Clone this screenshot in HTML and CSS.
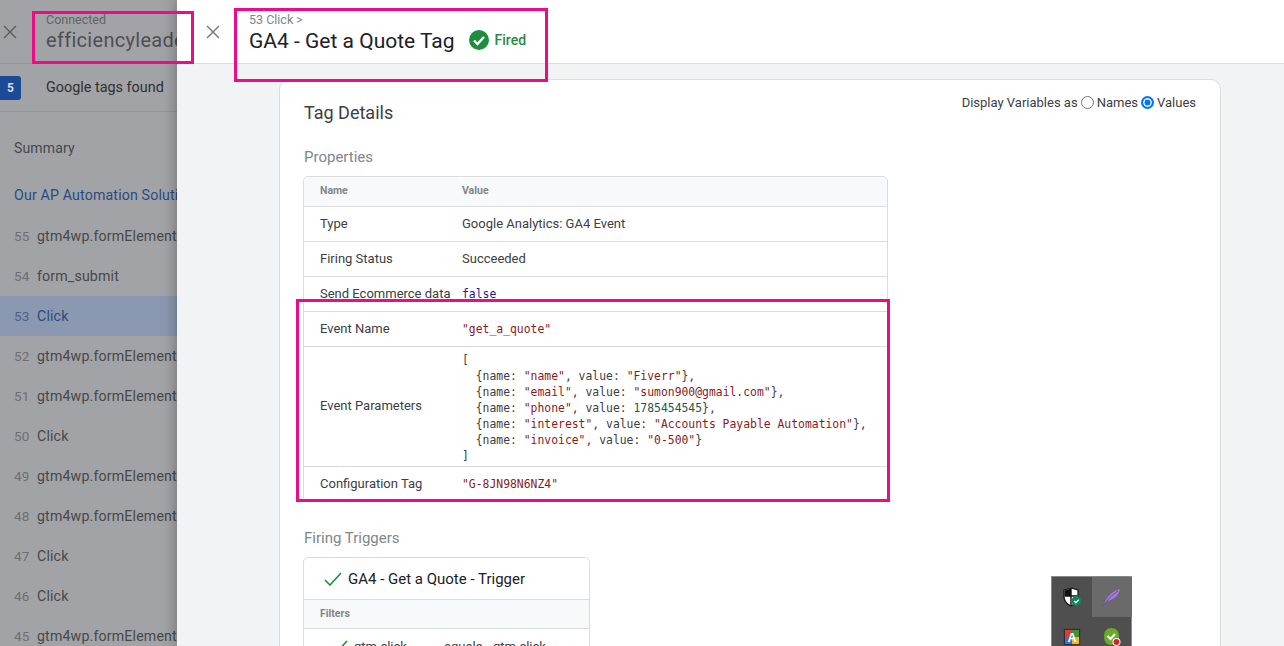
FILE: index.html
```html
<!DOCTYPE html>
<html lang="en">
  <head>
    <meta charset="UTF-8" />
    <title>GA4 - Get a Quote Tag</title>
    <link rel="stylesheet" href="styles.css">
  </head>
  <body>
    <div class="app">
      <aside class="sidebar">
        <div class="side-head">
          <svg class="close" viewBox="0 0 14 14"><path d="M1 1l12 12M13 1L1 13" /></svg>
          <div class="side-title">
            <div class="small">Connected</div>
            <div class="domain">efficiencyleaders.com</div>
          </div>
        </div>
        <div class="tags-row">
          <span class="badge">5</span>
          <span class="tags-text">Google tags found</span>
        </div>
        <div class="summary">Summary</div>
        <div class="page">Our AP Automation Solution</div>
        <div class="evt"><span class="num">55</span><span>gtm4wp.formElementEnter</span></div>
        <div class="evt"><span class="num">54</span><span>form_submit</span></div>
        <div class="evt active"><span class="num">53</span><span>Click</span></div>
        <div class="evt"><span class="num">52</span><span>gtm4wp.formElementLeave</span></div>
        <div class="evt"><span class="num">51</span><span>gtm4wp.formElementEnter</span></div>
        <div class="evt"><span class="num">50</span><span>Click</span></div>
        <div class="evt"><span class="num">49</span><span>gtm4wp.formElementLeave</span></div>
        <div class="evt"><span class="num">48</span><span>gtm4wp.formElementEnter</span></div>
        <div class="evt"><span class="num">47</span><span>Click</span></div>
        <div class="evt"><span class="num">46</span><span>Click</span></div>
        <div class="evt"><span class="num">45</span><span>gtm4wp.formElementLeave</span></div>
      </aside>

      <main class="panel">
        <header class="panel-head">
          <svg class="close panel-close" viewBox="0 0 14 14"><path d="M1 1l12 12M13 1L1 13" /></svg>
          <div>
            <div class="crumb">53 Click &gt;</div>
            <div class="title-row">
              <h1>GA4 - Get a Quote Tag</h1>
              <svg class="fired-icon" viewBox="0 0 20 20">
                <circle cx="10" cy="10" r="10" fill="#1e8e3e" />
                <path d="M5 10.5l3.5 3.5L15 7" fill="none" stroke="#fff" stroke-width="2.4" />
              </svg>
              <span class="fired">Fired</span>
            </div>
          </div>
        </header>

        <div class="panel-body">
          <section class="card">
            <div class="card-top">
              <h2>Tag Details</h2>
              <div class="display-vars">
                <span>Display Variables as</span>
                <span class="radio"></span><span>Names</span>
                <span class="radio on"></span><span>Values</span>
              </div>
            </div>

            <h3>Properties</h3>
            <table class="props">
              <tr class="head"><th>Name</th><th>Value</th></tr>
              <tr><td>Type</td><td>Google Analytics: GA4 Event</td></tr>
              <tr><td>Firing Status</td><td>Succeeded</td></tr>
              <tr><td>Send Ecommerce data</td><td><code class="kw">false</code></td></tr>
              <tr><td>Event Name</td><td><code class="str">"get_a_quote"</code></td></tr>
              <tr class="tall">
                <td>Event Parameters</td>
                <td><pre>[
  {name: <i>"name"</i>, value: <i>"Fiverr"</i>},
  {name: <i>"email"</i>, value: <i>"sumon900@gmail.com"</i>},
  {name: <i>"phone"</i>, value: <b>1785454545</b>},
  {name: <i>"interest"</i>, value: <i>"Accounts Payable Automation"</i>},
  {name: <i>"invoice"</i>, value: <i>"0-500"</i>}
]</pre></td>
              </tr>
              <tr><td>Configuration Tag</td><td><code class="str">"G-8JN98N6NZ4"</code></td></tr>
            </table>

            <h3 class="triggers-title">Firing Triggers</h3>
            <div class="trigger">
              <div class="trigger-name">
                <svg class="check" viewBox="0 0 18 14"><path d="M1 8l5 5L17 1" /></svg>
                <span>GA4 - Get a Quote - Trigger</span>
              </div>
              <div class="filters">Filters</div>
              <div class="filter-row">
                <svg class="check" viewBox="0 0 18 14"><path d="M1 8l5 5L17 1" /></svg>
                <span class="f1">gtm.click</span><span class="f2">equals</span><span>gtm.click</span>
              </div>
            </div>
          </section>
        </div>
      </main>

      <div class="mark mark-a"></div>
      <div class="mark mark-b"></div>
      <div class="mark mark-c"></div>

      <div class="tray">
        <div class="tray-cell">
          <svg viewBox="0 0 20 20" width="20" height="20">
            <path d="M2 3l7-2 7 2v7c0 4-3 7-7 9-4-2-7-5-7-9z" fill="#fff" stroke="#111" stroke-width="1.2" />
            <path d="M9 1.500v17M2.500 9h13" stroke="#111" stroke-width="1.4" />
            <path d="M2.500 3.500L9 1.500V9H2.500z" fill="#111" />
            <circle cx="14.500" cy="14" r="5" fill="#12825a" />
            <path d="M12.200 14l1.700 1.700 2.900-3" fill="none" stroke="#fff" stroke-width="1.300" />
          </svg>
        </div>
        <div class="tray-cell lit">
          <svg viewBox="0 0 20 20" width="20" height="20">
            <path d="M2 17C5 9 11 4 18 2c-1 6-6 11-13 12z" fill="#a678e2" />
            <path d="M1 19C6 12 10 8 16 4" fill="none" stroke="#6d4aa6" stroke-width="1" />
          </svg>
        </div>
        <div class="tray-cell">
          <svg viewBox="0 0 20 20" width="18" height="18">
            <rect x="1" y="1" width="18" height="18" fill="#222" />
            <rect x="2" y="2" width="8" height="8" fill="#d9402f" />
            <rect x="10" y="2" width="8" height="8" fill="#3f8f3e" />
            <rect x="2" y="10" width="8" height="8" fill="#3a6fd1" />
            <rect x="10" y="10" width="8" height="8" fill="#eab52c" />
            <text x="10" y="16" text-anchor="middle" class="tray-a">A</text>
          </svg>
        </div>
        <div class="tray-cell">
          <svg viewBox="0 0 20 20" width="20" height="20">
            <path d="M9 1c5 0 8 3 8 8s-3 9-8 9-7-4-7-9 3-8 7-8z" fill="#6aa92c" />
            <path d="M5.500 9l3 3 4.500-5" fill="none" stroke="#fff" stroke-width="2" />
            <circle cx="14.500" cy="15" r="4" fill="#fff" />
            <circle cx="14.500" cy="15" r="3" fill="#d8232a" />
          </svg>
        </div>
      </div>
    </div>
  </body>
</html>
```

FILE: styles.css
```css
* {
  box-sizing: border-box;
}

body {
  margin: 0;
  font-family: Roboto, "Liberation Sans", sans-serif;
  color: #3c4043;
  background-color: #f1f3f4;
}

.app {
  position: relative;
  display: flex;
  height: 100vh;
  overflow: hidden;
}

/* left list, dimmed by the open panel */
.sidebar {
  flex: 0 0 177px;
  overflow: hidden;
  white-space: nowrap;
  background-color: #a2a3a6;
  font-family: Roboto, sans-serif;
  color: #3f4042;
}

.side-head {
  display: flex;
  align-items: center;
  height: 64px;
  padding-left: 3px;
  border-bottom: 1px solid #949597;
}

.close {
  flex: none;
  width: 14px;
  height: 14px;
  fill: none;
  stroke: #5a5b5d;
  stroke-width: 1.4;
}

.side-title {
  margin-left: 29px;
  margin-top: 3px;
}

.small {
  font-size: 12.5px;
  line-height: 14px;
  color: #626365;
}

.domain {
  font-size: 20px;
  line-height: 26px;
  color: #4e4f51;
  letter-spacing: 0.3px;
}

.tags-row {
  display: flex;
  align-items: center;
  height: 48px;
  border-bottom: 1px solid #949597;
}

.badge {
  width: 21px;
  height: 24px;
  margin-right: 25px;
  border-radius: 0 3px 3px 0;
  background-color: #1b4b95;
  color: #d5dbe6;
  font-size: 12px;
  font-weight: 700;
  line-height: 24px;
  text-align: center;
}

.tags-text {
  font-size: 14.4px;
  color: #2f3032;
}

.summary {
  padding: 28px 0 0 14px;
  height: 60px;
  font-size: 14px;
  letter-spacing: 0.15px;
  color: #47484a;
}

.page {
  height: 44px;
  padding: 15px 0 0 14px;
  font-size: 14.2px;
  letter-spacing: 0.15px;
  color: #2c4a82;
}

.evt {
  display: flex;
  align-items: center;
  height: 40px;
  padding-left: 14px;
  font-size: 14.2px;
  letter-spacing: 0.15px;
  color: #47484a;
}

.evt .num {
  flex: 0 0 23px;
  font-size: 13.5px;
  color: #6d6e70;
}

.evt.active {
  background-color: #8a99b1;
  color: #2f4a7d;
}

.evt.active .num {
  color: #4b6088;
}

/* right panel */
.panel {
  position: relative;
  flex: 1;
  display: flex;
  flex-direction: column;
  min-width: 0;
  box-shadow: 0 0 14px rgba(0, 0, 0, 0.35);
}

.panel-head {
  display: flex;
  flex: 0 0 64px;
  padding: 14px 0 0 29px;
  background-color: #fff;
  border-bottom: 1px solid #dadce0;
}

.panel-close {
  margin: 11px 29px 0 0;
  stroke: #70757a;
}

.crumb {
  font-size: 12.5px;
  line-height: 12px;
  color: #80868b;
}

.title-row {
  display: flex;
  align-items: center;
  margin-top: 2px;
}

h1 {
  margin: 0;
  font-size: 21px;
  font-weight: 400;
  line-height: 26px;
  color: #202124;
}

.fired-icon {
  width: 20px;
  height: 20px;
  margin: 0 6px 3px 14px;
}

.fired {
  margin-bottom: 3px;
  font-size: 14px;
  font-weight: 500;
  color: #2a8a45;
}

.panel-body {
  flex: 1;
  overflow: hidden;
  padding: 15px 63px 0 102px;
}

.card {
  height: 620px;
  padding: 0 24px;
  background-color: #fff;
  border: 1px solid #dadce0;
  border-radius: 10px;
}

.card-top {
  display: flex;
  justify-content: space-between;
  height: 67px;
  padding-top: 13px;
}

h2 {
  margin: 8px 0 0;
  font-size: 18px;
  font-weight: 400;
  line-height: 24px;
  color: #3c4043;
}

.display-vars {
  display: flex;
  align-items: flex-start;
  font-size: 13px;
  line-height: 19px;
  color: #3c4043;
}

.radio {
  width: 13px;
  height: 13px;
  margin: 3px 3px 0 3px;
  border: 1px solid #767676;
  border-radius: 50%;
}

.radio.on {
  border: 2px solid #0075ff;
  background-color: #0075ff;
  box-shadow: inset 0 0 0 1.5px #fff;
}

h3 {
  margin: 0 0 9px;
  font-size: 15px;
  font-weight: 400;
  line-height: 20px;
  color: #80868b;
}

.props {
  width: 585px;
  margin-left: -1px;
  border-collapse: separate;
  border-spacing: 0;
  border: 1px solid #dadce0;
  border-radius: 5px;
  font-size: 13px;
  color: #3c4043;
}

.props th {
  height: 29px;
  padding: 0 0 2px 16px;
  background-color: #f8f9fa;
  color: #80868b;
  font-size: 10.5px;
  font-weight: 700;
  text-align: left;
  border-radius: 5px 5px 0 0;
}

.props td {
  height: 35px;
  padding: 0 0 2px 16px;
  border-top: 1px solid #dadce0;
}

.props th:first-child,
.props td:first-child {
  width: 157px;
}

.props td + td,
.props th + th {
  padding-left: 1px;
}

.props .tall td {
  height: 120px;
}

.props .tall td + td {
  padding-top: 3px;
  padding-bottom: 0;
}

code,
pre {
  font-family: "DejaVu Sans Mono", monospace;
  font-size: 11.4px;
}

pre {
  margin: 0;
  line-height: 16px;
  color: #3c4043;
}

pre i,
.str {
  font-style: normal;
  color: #8a1c1c;
}

pre b {
  font-weight: 400;
  color: #1d5a45;
}

.kw {
  color: #1a1a8c;
}

.triggers-title {
  margin: 26px 0 9px;
}

.trigger {
  width: 287px;
  margin-left: -1px;
  border: 1px solid #dadce0;
  border-radius: 5px;
  font-size: 15px;
}

.trigger-name {
  display: flex;
  align-items: center;
  height: 41px;
  padding-left: 20px;
  color: #202124;
}

.check {
  width: 18px;
  height: 14px;
  margin-right: 6px;
  fill: none;
  stroke: #1e8e3e;
  stroke-width: 1.6;
}

.filters {
  height: 30px;
  padding-left: 16px;
  background-color: #f8f9fa;
  border-top: 1px solid #dadce0;
  border-bottom: 1px solid #dadce0;
  color: #80868b;
  font-size: 10.5px;
  font-weight: 700;
  line-height: 28px;
}

.filter-row {
  display: flex;
  align-items: center;
  height: 35px;
  padding-left: 26px;
  font-size: 13px;
}

.f1 {
  width: 90px;
}

.f2 {
  width: 49px;
}

/* annotation boxes from the screenshot */
.mark {
  position: absolute;
  border: 3px solid #ec0c85;
}

.mark-a {
  left: 32px;
  top: 11px;
  width: 162px;
  height: 53px;
}

.mark-b {
  left: 234px;
  top: 8px;
  width: 314px;
  height: 74px;
}

.mark-c {
  left: 296px;
  top: 299px;
  width: 594px;
  height: 203px;
}

/* windows tray popup over the page */
.tray {
  position: absolute;
  left: 1051px;
  top: 576px;
  display: grid;
  grid-template-columns: 40px 40px;
  grid-auto-rows: 40px;
  width: 81px;
  height: 90px;
  background-color: #4f4f4f;
  border: 1px solid #8a8a8a;
  border-bottom: 0;
}

.tray-cell {
  display: flex;
  align-items: center;
  justify-content: center;
}

.tray-cell.lit {
  background-color: #6a6a6a;
}

.tray-a {
  font-family: "Liberation Sans", sans-serif;
  font-size: 14px;
  font-weight: 700;
  fill: #fff;
}
```
